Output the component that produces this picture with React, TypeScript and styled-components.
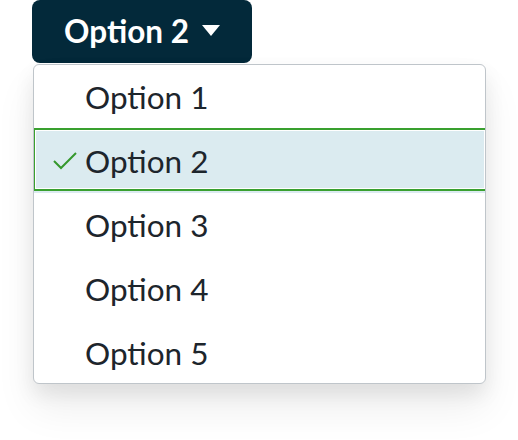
import styled, { createGlobalStyle } from 'styled-components'

const GlobalStyle = createGlobalStyle`
  html, body {
    margin: 0;
    padding: 0;
    background: #ffffff;
  }
  body {
    font-family: Lato, "Liberation Sans", sans-serif;
  }
`

const Page = styled.div`
  width: 518px;
  height: 440px;
  padding-left: 32px;
  box-sizing: border-box;
  display: flex;
  flex-direction: column;
  align-items: flex-start;
`

const Trigger = styled.button`
  width: 220px;
  height: 63px;
  border: none;
  border-radius: 8px;
  background: #03293a;
  color: #ffffff;
  font-family: Lato, "Liberation Sans", sans-serif;
  font-weight: 700;
  font-size: 31.5px;
  display: flex;
  align-items: center;
  justify-content: center;
  gap: 13px;
  padding: 0 0 2px;
  cursor: pointer;
`

const Caret = styled.svg`
  width: 18px;
  height: 11px;
  fill: #ffffff;
`

const Menu = styled.ul`
  list-style: none;
  margin: 1px 0 0 1px;
  padding: 0;
  width: 453px;
  height: 320px;
  box-sizing: border-box;
  border: 1px solid #bfc5ca;
  border-radius: 6px;
  background: #ffffff;
  overflow: hidden;
  box-shadow: 0 10px 20px rgba(0, 0, 0, 0.08), 0 24px 40px rgba(0, 0, 0, 0.07);
`

const Item = styled.li<{ $selected?: boolean }>`
  position: relative;
  height: 64px;
  box-sizing: border-box;
  display: flex;
  align-items: center;
  padding-left: 51px;
  font-size: 31.5px;
  color: #1d252c;
  background: ${(p) => (p.$selected ? '#dbebf0' : 'transparent')};

  &::after {
    content: '';
    display: ${(p) => (p.$selected ? 'block' : 'none')};
    position: absolute;
    top: -1px;
    bottom: 2px;
    left: -1px;
    right: -2px;
    border: 2px solid #39a02f;
    box-shadow: inset 0 0 0 1px #ffffff;
  }
`

const Check = styled.svg`
  position: absolute;
  left: 18px;
  top: 21px;
  width: 26px;
  height: 22px;
  fill: none;
  stroke: #35982d;
  stroke-width: 2;
`

const options = ['Option 1', 'Option 2', 'Option 3', 'Option 4', 'Option 5']

const App = () => {
  const selected = 'Option 2'
  return (
    <Page>
      <GlobalStyle />
      <Trigger>
        {selected}
        <Caret viewBox="0 0 18 11">
          <path d="M0 0 H18 L9 11 Z" />
        </Caret>
      </Trigger>
      <Menu>
        {options.map((o) => (
          <Item key={o} $selected={o === selected}>
            {o === selected && (
              <Check viewBox="0 0 26 22">
                <path d="M2 11 L9 18 L24 3" />
              </Check>
            )}
            {o}
          </Item>
        ))}
      </Menu>
    </Page>
  )
}

export default App
